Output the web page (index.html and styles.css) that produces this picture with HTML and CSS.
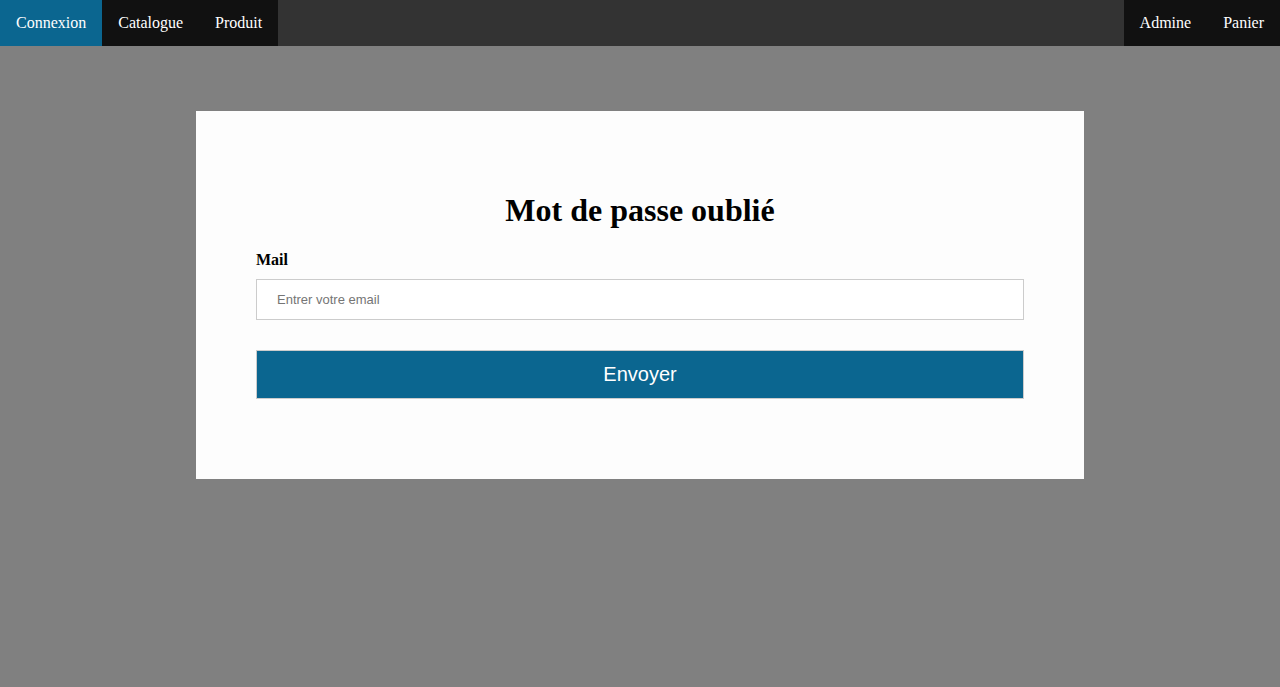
FILE: index.html
```html
<!DOCTYPE html>
<html lang="fr">
<head>
<meta charset="utf-8">
<title>Mot de passe oublié</title>
<link rel="stylesheet" href="styles.css">
</head>
<body>
<nav class="topnav">
  <div class="nav-group">
    <a class="nav-link active" href="#">Connexion</a>
    <a class="nav-link" href="#">Catalogue</a>
    <a class="nav-link" href="#">Produit</a>
  </div>
  <div class="nav-group">
    <a class="nav-link" href="#">Admine</a>
    <a class="nav-link" href="#">Panier</a>
  </div>
</nav>
<main class="page">
  <form class="card">
    <h1 class="title">Mot de passe oublié</h1>
    <label class="label" for="mail">Mail</label>
    <input class="field" id="mail" type="email" placeholder="Entrer votre email">
    <button class="submit" type="button">Envoyer</button>
  </form>
</main>
</body>
</html>
```

FILE: styles.css
```css
* { box-sizing: border-box; }
html, body { margin: 0; padding: 0; }
body {
  background: #808080;
  font-family: "Liberation Serif", "Times New Roman", serif;
  min-height: 687px;
}
.topnav {
  display: flex;
  justify-content: space-between;
  background: #333333;
  height: 46px;
}
.nav-group { display: flex; background: #111111; }
.nav-link {
  display: block;
  color: #ffffff;
  text-decoration: none;
  font-size: 16px;
  line-height: 18px;
  padding: 14px 16px;
}
.nav-link.active { background: #0b6690; }
.page {
  display: flex;
  justify-content: center;
  padding-top: 65px;
}
.card {
  width: 888px;
  height: 368px;
  background: #fdfdfd;
  padding: 60px 60px 0;
  display: flex;
  flex-direction: column;
}
.title {
  margin: 21px 0 22px;
  font-size: 32px;
  line-height: 37px;
  text-align: center;
  font-weight: bold;
  color: #000;
}
.label {
  display: block;
  font-weight: bold;
  font-size: 16px;
  line-height: 18px;
  color: #000;
  margin-bottom: 10px;
}
.field {
  display: block;
  width: 768px;
  height: 41px;
  border: 1px solid #cccccc;
  padding: 0 20px;
  font-family: "Liberation Sans", Arial, sans-serif;
  font-size: 13px;
  color: #333;
  background: #fff;
  outline: none;
}
.field::placeholder { color: #757575; }
.submit {
  display: block;
  width: 768px;
  height: 49px;
  margin-top: 30px;
  padding: 0;
  background: #0b6690;
  border: 1px solid #cccccc;
  color: #ffffff;
  font-family: "Liberation Sans", Arial, sans-serif;
  font-size: 20px;
  cursor: pointer;
}
```
